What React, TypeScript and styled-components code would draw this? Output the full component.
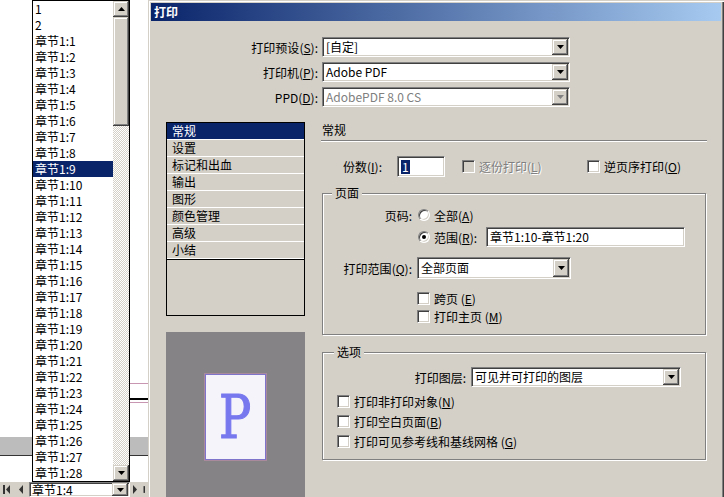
import React from "react";
import styled, { createGlobalStyle, css } from "styled-components";

const face = "#d4d0c8";
const navy = "#0a246a";
const shadow = "#808080";
const dark = "#404040";

const GlobalStyle = createGlobalStyle`
  html, body {
    margin: 0;
    padding: 0;
    background: #fff;
  }
  body {
    font-family: "Noto Sans CJK SC", "Noto Sans", sans-serif;
    font-size: 12px;
    color: #000;
  }
  * {
    box-sizing: border-box;
  }
  u {
    text-underline-offset: 1px;
  }
`;

const sunken = css`
  border: 1px solid;
  border-color: ${shadow} #fff #fff ${shadow};
  box-shadow: inset 1px 1px ${dark}, inset -1px -1px ${face};
`;

const raised = css`
  background: ${face};
  box-shadow: inset -1px -1px ${dark}, inset 1px 1px ${face},
    inset -2px -2px ${shadow}, inset 2px 2px #fff;
`;

const chapters = [
  "1",
  "2",
  ...Array.from({ length: 28 }, (_, i) => `章节1:${i + 1}`)
];

const sections = [
  "常规",
  "设置",
  "标记和出血",
  "输出",
  "图形",
  "颜色管理",
  "高级",
  "小结"
];

const Key: React.FC<{ k: string }> = ({ k }) => (
  <>
    (<u>{k}</u>)
  </>
);

const Arrow: React.FC<{ dir: "up" | "down"; color?: string }> = ({
  dir,
  color = "#000"
}) => (
  <svg width="7" height="4" viewBox="0 0 7 4">
    <path d={dir === "down" ? "M0 0H7L3.5 4Z" : "M0 4H7L3.5 0Z"} fill={color} />
  </svg>
);

const NavIcon: React.FC<{ kind: "first" | "prev" | "next" | "last" }> = ({
  kind
}) => (
  <svg width="8" height="9" viewBox="0 0 8 9" fill="#333">
    {kind === "first" && (
      <>
        <rect x="0" y="0" width="2" height="9" />
        <path d="M7 0L3 4.5L7 9Z" />
      </>
    )}
    {kind === "prev" && <path d="M5 0L1 4.5L5 9Z" />}
    {kind === "next" && <path d="M1 0L5 4.5L1 9Z" />}
    {kind === "last" && <rect x="2" y="0" width="2" height="9" />}
  </svg>
);

export default function App() {
  return (
    <>
      <GlobalStyle />
      <Screen>
        <LeftPane>
          <DocCanvas>
            <PageRule $color="#c896b0" $h={1} $mt={383} />
            <PageRule $color="#000" $h={2} $mt={14} />
            <PageRule $color="#c896b0" $h={1} $mt={2} />
            <GrayBand />
          </DocCanvas>
          <NavBar>
            <NavSlot $w={14}>
              <NavIcon kind="first" />
            </NavSlot>
            <NavSlot $w={15}>
              <NavIcon kind="prev" />
            </NavSlot>
            <ComboBox $w={101} $h={15} $compact>
              <ComboText $compact>章节1:4</ComboText>
              <DropButton>
                <Arrow dir="down" />
              </DropButton>
            </ComboBox>
            <NavSlot $w={12}>
              <NavIcon kind="next" />
            </NavSlot>
            <NavSlot $w={6}>
              <NavIcon kind="last" />
            </NavSlot>
          </NavBar>

          <ChapterPopup>
            <ChapterItems>
              {chapters.map(c => (
                <ChapterItem key={c} $selected={c === "章节1:9"}>
                  {c}
                </ChapterItem>
              ))}
            </ChapterItems>
            <ScrollBar>
              <ScrollButton>
                <Arrow dir="up" />
              </ScrollButton>
              <ScrollThumb />
              <ScrollTrack />
              <ScrollButton>
                <Arrow dir="down" />
              </ScrollButton>
            </ScrollBar>
          </ChapterPopup>
        </LeftPane>

        <Dialog>
          <TitleBar>打印</TitleBar>

          <TopFields>
            <FieldRow>
              <FieldLabel>
                打印预设<Key k="S" />:
              </FieldLabel>
              <ComboBox $w={248}>
                <ComboText>[自定]</ComboText>
                <DropButton>
                  <Arrow dir="down" />
                </DropButton>
              </ComboBox>
            </FieldRow>
            <FieldRow>
              <FieldLabel>
                打印机<Key k="P" />:
              </FieldLabel>
              <ComboBox $w={248}>
                <ComboText>Adobe PDF</ComboText>
                <DropButton>
                  <Arrow dir="down" />
                </DropButton>
              </ComboBox>
            </FieldRow>
            <FieldRow>
              <FieldLabel>
                PPD<Key k="D" />:
              </FieldLabel>
              <ComboBox $w={248} $disabled>
                <ComboText>AdobePDF 8.0 CS</ComboText>
                <DropButton>
                  <Arrow dir="down" color={shadow} />
                </DropButton>
              </ComboBox>
            </FieldRow>
          </TopFields>

          <MainRow>
            <LeftCol>
              <SectionList>
                <SectionItems>
                  {sections.map(s => (
                    <SectionItem key={s} $selected={s === "常规"}>
                      {s}
                    </SectionItem>
                  ))}
                </SectionItems>
              </SectionList>
              <Preview>
                <PreviewPage>
                  <PreviewGlyph>P</PreviewGlyph>
                </PreviewPage>
              </Preview>
            </LeftCol>

            <RightCol>
              <Heading>常规</Heading>
              <Separator />

              <CopiesRow>
                <CopiesLabel>
                  份数<Key k="I" />:
                </CopiesLabel>
                <TextBox $w={48} $h={21}>
                  <Selection>1</Selection>
                </TextBox>
                <CheckItem $ml={17} $w={125} $disabled>
                  <CheckBox $disabled />
                  <span>
                    逐份打印<Key k="L" />
                  </span>
                </CheckItem>
                <CheckItem>
                  <CheckBox />
                  <span>
                    逆页序打印<Key k="O" />
                  </span>
                </CheckItem>
              </CopiesRow>

              <GroupBox $mt={16}>
                <GroupLegend $ml={9}>页面</GroupLegend>
                <GroupRow $mt={7} $h={16}>
                  <RowLabel $w={89}>页码:</RowLabel>
                  <Radio />
                  <OptionText>
                    全部<Key k="A" />
                  </OptionText>
                </GroupRow>
                <GroupRow $mt={4} $h={20}>
                  <RowLabel $w={89} />
                  <Radio $checked />
                  <OptionText $w={52}>
                    范围<Key k="R" />:
                  </OptionText>
                  <TextBox $w={199} $h={20}>
                    章节1:10-章节1:20
                  </TextBox>
                </GroupRow>
                <GroupRow $mt={10} $h={22}>
                  <RowLabel $w={89}>
                    打印范围<Key k="Q" />:
                  </RowLabel>
                  <ComboBox $w={154} $h={22}>
                    <ComboText>全部页面</ComboText>
                    <DropButton>
                      <Arrow dir="down" />
                    </DropButton>
                  </ComboBox>
                </GroupRow>
                <GroupRow $mt={11} $h={16}>
                  <RowLabel $w={89} />
                  <CheckItem>
                    <CheckBox />
                    <span>
                      跨页 <Key k="E" />
                    </span>
                  </CheckItem>
                </GroupRow>
                <GroupRow $mt={2} $h={16}>
                  <RowLabel $w={89} />
                  <CheckItem>
                    <CheckBox />
                    <span>
                      打印主页 <Key k="M" />
                    </span>
                  </CheckItem>
                </GroupRow>
              </GroupBox>

              <GroupBox $mt={17}>
                <GroupLegend $ml={11}>选项</GroupLegend>
                <GroupRow $mt={8} $h={20}>
                  <RowLabel $w={143}>打印图层:</RowLabel>
                  <ComboBox $w={210}>
                    <ComboText>可见并可打印的图层</ComboText>
                    <DropButton>
                      <Arrow dir="down" />
                    </DropButton>
                  </ComboBox>
                </GroupRow>
                <GroupRow $mt={6} $h={16} $pl={14}>
                  <CheckItem>
                    <CheckBox />
                    <span>
                      打印非打印对象<Key k="N" />
                    </span>
                  </CheckItem>
                </GroupRow>
                <GroupRow $mt={4} $h={16} $pl={14}>
                  <CheckItem>
                    <CheckBox />
                    <span>
                      打印空白页面<Key k="B" />
                    </span>
                  </CheckItem>
                </GroupRow>
                <GroupRow $mt={4} $h={16} $pl={14}>
                  <CheckItem>
                    <CheckBox />
                    <span>
                      打印可见参考线和基线网格 <Key k="G" />
                    </span>
                  </CheckItem>
                </GroupRow>
              </GroupBox>
            </RightCol>
          </MainRow>
        </Dialog>
      </Screen>
    </>
  );
}

const Screen = styled.div`
  width: 724px;
  height: 497px;
  display: flex;
  overflow: hidden;
`;

/* ---------- document side with the open page list ---------- */

const LeftPane = styled.div`
  position: relative;
  width: 148px;
  flex-shrink: 0;
  display: flex;
  flex-direction: column;
`;

const DocCanvas = styled.div`
  flex: 1;
  background: #fff;
  display: flex;
  flex-direction: column;
`;

const PageRule = styled.div<{ $color: string; $h: number; $mt: number }>`
  margin: ${p => p.$mt}px 0 0 130px;
  height: ${p => p.$h}px;
  background: ${p => p.$color};
`;

const GrayBand = styled.div`
  margin-top: 34px;
  height: 19px;
  background: #bcbcbc;
  border-bottom: 1px solid #333;
`;

const NavBar = styled.div`
  height: 15px;
  flex-shrink: 0;
  display: flex;
  align-items: center;
  background: ${face};
`;

const NavSlot = styled.span<{ $w: number }>`
  width: ${p => p.$w}px;
  display: flex;
  justify-content: center;
  flex-shrink: 0;
`;

const ChapterPopup = styled.div`
  position: absolute;
  left: 32px;
  top: 0;
  width: 98px;
  height: 482px;
  border: 1px solid #000;
  background: #fff;
  display: flex;
  z-index: 2;
`;

const ChapterItems = styled.div`
  width: 80px;
  display: flex;
  flex-direction: column;
  overflow: hidden;
`;

const ChapterItem = styled.div<{ $selected?: boolean }>`
  height: 16px;
  line-height: 16px;
  padding-left: 2px;
  white-space: nowrap;
  background: ${p => (p.$selected ? navy : "transparent")};
  color: ${p => (p.$selected ? "#fff" : "#000")};
`;

const ScrollBar = styled.div`
  width: 16px;
  display: flex;
  flex-direction: column;
`;

const ScrollButton = styled.div`
  ${raised};
  height: 16px;
  display: flex;
  align-items: center;
  justify-content: center;
`;

const ScrollThumb = styled.div`
  ${raised};
  height: 109px;
`;

const ScrollTrack = styled.div`
  flex: 1;
  background: repeating-conic-gradient(#fff 0 25%, ${face} 0 50%) 0 0 / 2px
    2px;
`;

/* ---------- print dialog ---------- */

const Dialog = styled.div`
  flex: 1;
  height: 497px;
  display: flex;
  flex-direction: column;
  background: ${face};
  padding: 3px 3px 0 3px;
  box-shadow: inset 1px 1px ${face}, inset 2px 2px #fff,
    inset -1px 0 ${dark}, inset -2px 0 ${shadow};
`;

const TitleBar = styled.div`
  height: 18px;
  flex-shrink: 0;
  padding-left: 3px;
  line-height: 18px;
  font-weight: bold;
  color: #fff;
  background: linear-gradient(90deg, ${navy}, #a6caf0);
`;

const TopFields = styled.div`
  margin-top: 16px;
  display: flex;
  flex-direction: column;
  gap: 5px;
`;

const FieldRow = styled.div`
  height: 20px;
  display: flex;
  align-items: center;
`;

const FieldLabel = styled.span`
  width: 167px;
  margin-right: 4px;
  text-align: right;
  white-space: nowrap;
`;

const ComboBox = styled.div<{
  $w: number;
  $h?: number;
  $disabled?: boolean;
  $compact?: boolean;
}>`
  ${sunken};
  width: ${p => p.$w}px;
  height: ${p => p.$h ?? 20}px;
  flex-shrink: 0;
  padding: ${p => (p.$compact ? "0 1px 0 0" : "1px")};
  display: flex;
  background: #fff;
  color: ${p => (p.$disabled ? shadow : "#000")};
`;

const ComboText = styled.span<{ $compact?: boolean }>`
  flex: 1;
  display: flex;
  align-items: center;
  padding-left: 2px;
  white-space: nowrap;
  overflow: ${p => (p.$compact ? "visible" : "hidden")};
  line-height: ${p => (p.$compact ? "12px" : "14px")};
`;

const DropButton = styled.span`
  ${raised};
  width: 16px;
  flex-shrink: 0;
  display: flex;
  align-items: center;
  justify-content: center;
`;

const TextBox = styled.div<{ $w: number; $h: number }>`
  ${sunken};
  width: ${p => p.$w}px;
  height: ${p => p.$h}px;
  flex-shrink: 0;
  padding: 0 3px;
  display: flex;
  align-items: center;
  background: #fff;
  white-space: nowrap;
  line-height: 14px;
`;

const Selection = styled.span`
  background: ${navy};
  color: #fff;
  padding: 0 1px;
`;

const MainRow = styled.div`
  flex: 1;
  min-height: 0;
  margin-top: 15px;
  display: flex;
`;

const LeftCol = styled.div`
  width: 139px;
  margin-left: 15px;
  display: flex;
  flex-direction: column;
`;

const SectionList = styled.div`
  height: 194px;
  border: 1px solid #000;
  background: ${face};
`;

const SectionItems = styled.div`
  border-bottom: 1px solid #000;
`;

const SectionItem = styled.div<{ $selected?: boolean }>`
  height: 17px;
  line-height: 16px;
  padding-left: 5px;
  border-bottom: 1px solid #fff;
  background: ${p => (p.$selected ? navy : face)};
  color: ${p => (p.$selected ? "#fff" : "#000")};
`;

const Preview = styled.div`
  flex: 1;
  margin-top: 16px;
  padding-top: 42px;
  display: flex;
  justify-content: center;
  align-items: flex-start;
  background: #858385;
`;

const PreviewPage = styled.div`
  width: 61px;
  height: 86px;
  border: 1px solid #7f74cc;
  box-shadow: 0 0 0 1px #a88a9c;
  background: #f6f4fb;
  display: flex;
  align-items: center;
  justify-content: center;
`;

const PreviewGlyph = styled.span`
  font-family: "DejaVu Serif", "Liberation Serif", serif;
  font-size: 60px;
  line-height: 1;
  color: #7777ee;
  -webkit-text-stroke: 1.2px #7777ee;
  transform: scaleX(0.8);
  margin-top: -1px;
`;

const RightCol = styled.div`
  width: 386px;
  margin-left: 16px;
  display: flex;
  flex-direction: column;
`;

const Heading = styled.div`
  height: 16px;
  line-height: 16px;
  padding-left: 1px;
`;

const Separator = styled.div`
  margin-top: 2px;
  height: 2px;
  border-top: 1px solid ${shadow};
  border-bottom: 1px solid #fff;
`;

const CopiesRow = styled.div`
  margin-top: 14px;
  height: 21px;
  padding-left: 22px;
  display: flex;
  align-items: center;
`;

const CopiesLabel = styled.span`
  width: 54px;
  white-space: nowrap;
`;

const CheckItem = styled.label<{ $ml?: number; $w?: number; $disabled?: boolean }>`
  display: flex;
  align-items: center;
  gap: 4px;
  margin-left: ${p => p.$ml ?? 0}px;
  width: ${p => (p.$w ? `${p.$w}px` : "auto")};
  white-space: nowrap;
  color: ${p => (p.$disabled ? shadow : "#000")};
  text-shadow: ${p => (p.$disabled ? "1px 1px #fff" : "none")};
`;

const CheckBox = styled.span<{ $disabled?: boolean }>`
  ${sunken};
  width: 13px;
  height: 13px;
  flex-shrink: 0;
  background: ${p => (p.$disabled ? face : "#fff")};
`;

const Radio = styled.span<{ $checked?: boolean }>`
  ${sunken};
  width: 12px;
  height: 12px;
  margin-left: 1px;
  margin-right: 4px;
  flex-shrink: 0;
  border-radius: 50%;
  background: #fff;
  display: flex;
  align-items: center;
  justify-content: center;

  &::after {
    content: "";
    width: 4px;
    height: 4px;
    border-radius: 50%;
    background: ${p => (p.$checked ? "#000" : "transparent")};
  }
`;

const OptionText = styled.span<{ $w?: number }>`
  width: ${p => (p.$w ? `${p.$w}px` : "auto")};
  flex-shrink: 0;
  white-space: nowrap;
`;

const GroupBox = styled.div<{ $mt: number }>`
  margin: ${p => p.$mt}px 0 0 1px;
  width: 384px;
  padding-bottom: 10px;
  border: 1px solid ${shadow};
  box-shadow: inset 1px 1px #fff, 1px 1px #fff;
  display: flex;
  flex-direction: column;
`;

const GroupLegend = styled.span<{ $ml: number }>`
  align-self: flex-start;
  margin: -8px 0 0 ${p => p.$ml}px;
  padding: 0 3px;
  height: 14px;
  line-height: 14px;
  background: ${face};
`;

const GroupRow = styled.div<{ $mt: number; $h: number; $pl?: number }>`
  margin-top: ${p => p.$mt}px;
  height: ${p => p.$h}px;
  padding-left: ${p => p.$pl ?? 0}px;
  display: flex;
  align-items: center;
`;

const RowLabel = styled.span<{ $w: number }>`
  width: ${p => p.$w}px;
  margin-right: 5px;
  flex-shrink: 0;
  text-align: right;
  white-space: nowrap;
`;
